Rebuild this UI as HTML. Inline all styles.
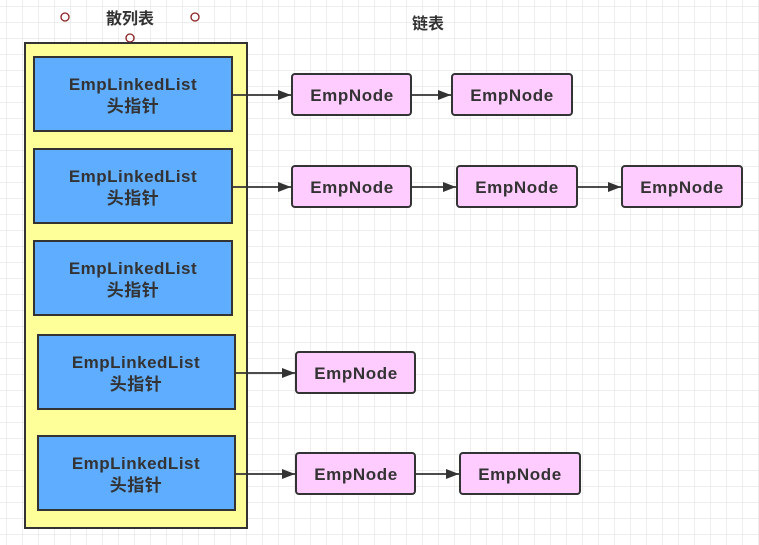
<!DOCTYPE html>
<html><head><meta charset="utf-8"><style>
html,body{margin:0;padding:0;background:#fff}
svg{display:block}
text{font-family:"Liberation Sans","Noto Sans CJK SC",sans-serif;font-weight:bold;fill:#333}
</style></head><body>
<svg width="759" height="545" viewBox="0 0 759 545" xmlns="http://www.w3.org/2000/svg">
<defs>
<pattern id="g" x="7" y="7" width="16" height="16" patternUnits="userSpaceOnUse">
<path d="M16 0V16M0 16H16" stroke="#dedede" stroke-width="1" fill="none"/>
</pattern>
<marker id="a" markerWidth="13" markerHeight="10" refX="13" refY="5" orient="auto" markerUnits="userSpaceOnUse">
<path d="M0 0L13 5L0 10Z" fill="#333"/>
</marker>
</defs>
<rect width="759" height="545" fill="url(#g)"/>
<g fill="none" stroke="#8b2020" stroke-width="1.3">
<circle cx="65" cy="17" r="4"/><circle cx="195" cy="17" r="4"/><circle cx="130" cy="38" r="4"/>
</g>
<text x="130" y="24" font-size="16" text-anchor="middle">散列表</text>
<text x="428" y="29" font-size="16" text-anchor="middle">链表</text>
<rect x="25" y="43" width="222" height="485" fill="#ffff99" stroke="#333" stroke-width="2"/>
<g fill="#5fadff" stroke="#333" stroke-width="2">
<rect x="34" y="57" width="198" height="74"/>
<rect x="34" y="149" width="198" height="74"/>
<rect x="34" y="241" width="198" height="74"/>
<rect x="38" y="335" width="197" height="74"/>
<rect x="38" y="436" width="197" height="74"/>
</g>
<g font-size="17" text-anchor="middle" letter-spacing="0.5">
<text x="133" y="90">EmpLinkedList</text><text x="133" y="112">头指针</text>
<text x="133" y="182">EmpLinkedList</text><text x="133" y="204">头指针</text>
<text x="133" y="274">EmpLinkedList</text><text x="133" y="296">头指针</text>
<text x="136" y="368">EmpLinkedList</text><text x="136" y="390">头指针</text>
<text x="136" y="469">EmpLinkedList</text><text x="136" y="491">头指针</text>
</g>
<g fill="#ffccff" stroke="#333" stroke-width="2">
<rect x="292" y="74" width="119" height="41" rx="3"/>
<rect x="452" y="74" width="120" height="41" rx="3"/>
<rect x="292" y="166" width="119" height="41" rx="3"/>
<rect x="457" y="166" width="120" height="41" rx="3"/>
<rect x="622" y="166" width="120" height="41" rx="3"/>
<rect x="296" y="352" width="119" height="41" rx="3"/>
<rect x="296" y="453" width="119" height="41" rx="3"/>
<rect x="460" y="453" width="120" height="41" rx="3"/>
</g>
<g font-size="17" text-anchor="middle" letter-spacing="0.6">
<text x="352" y="101">EmpNode</text><text x="512" y="101">EmpNode</text>
<text x="352" y="193">EmpNode</text><text x="517" y="193">EmpNode</text><text x="682" y="193">EmpNode</text>
<text x="356" y="379">EmpNode</text>
<text x="356" y="480">EmpNode</text><text x="520" y="480">EmpNode</text>
</g>
<g stroke="#333" stroke-width="1.8" marker-end="url(#a)">
<line x1="232" y1="95" x2="291" y2="95"/>
<line x1="411" y1="95" x2="451" y2="95"/>
<line x1="232" y1="187" x2="291" y2="187"/>
<line x1="411" y1="187" x2="456" y2="187"/>
<line x1="577" y1="187" x2="621" y2="187"/>
<line x1="235" y1="373" x2="295" y2="373"/>
<line x1="235" y1="474" x2="295" y2="474"/>
<line x1="415" y1="474" x2="459" y2="474"/>
</g>
</svg>
</body></html>
